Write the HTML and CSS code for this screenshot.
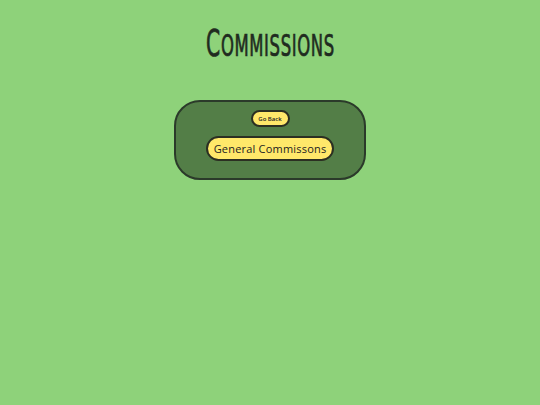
FILE: index.html
```html
<!DOCTYPE html>
<html>
<head>
<meta charset="utf-8">
<link rel="stylesheet" href="styles.css">
</head>
<body>
<main class="page">
  <h1 class="title">Commissions</h1>
  <section class="panel">
    <button class="btn btn-small">Go Back</button>
    <button class="btn btn-large">General Commissons</button>
  </section>
</main>
</body>
</html>
```
FILE: styles.css
```css
html, body {
  margin: 0;
  padding: 0;
  background: #8ed27a;
  width: 540px;
  height: 405px;
  overflow: hidden;
}
.page {
  display: flex;
  flex-direction: column;
  align-items: center;
}
.title {
  margin: 22px 0 0 0;
  height: 44px;
  font-family: "DejaVu Sans Condensed", "DejaVu Sans", sans-serif;
  text-transform: uppercase;
  font-weight: normal;
  font-size: 30px;
  line-height: 44px;
  color: #1f2b20;
  transform: scaleX(0.61);
  letter-spacing: 1px;
  white-space: nowrap;
  -webkit-text-stroke: 0.7px #1f2b20;
}
.title::first-letter {
  font-size: 37px;
}
.panel {
  margin-top: 34px;
  width: 188px;
  height: 76px;
  box-sizing: content-box;
  border: 2px solid #2b3a2a;
  border-radius: 26px;
  background: #537e47;
  display: flex;
  flex-direction: column;
  align-items: center;
}
.btn {
  background: #ffe86a;
  border: 2px solid #2b2f22;
  border-radius: 999px;
  color: #222;
  font-family: "Open Sans", sans-serif;
  padding: 0;
  white-space: nowrap;
  cursor: pointer;
}
.btn-small {
  margin-top: 8px;
  width: 39px;
  height: 17px;
  font-size: 6px;
  font-weight: 600;
}
.btn-large {
  margin-top: 9px;
  width: 128px;
  height: 25px;
  font-size: 11px;
  letter-spacing: 0.2px;
}
```
